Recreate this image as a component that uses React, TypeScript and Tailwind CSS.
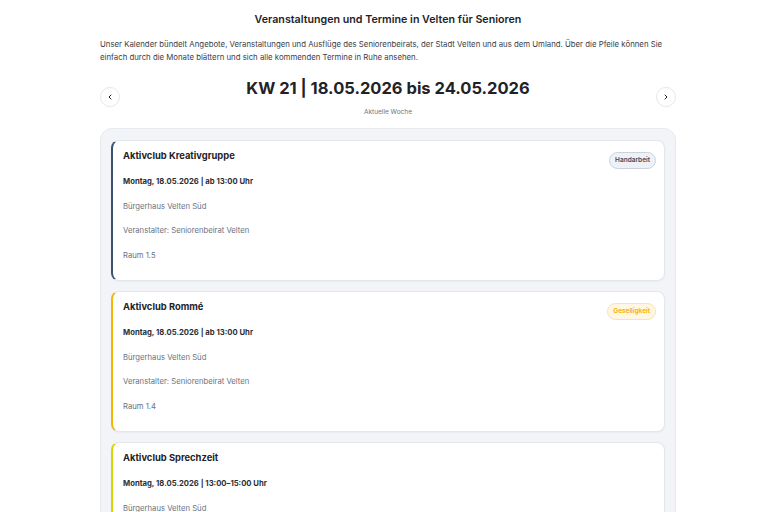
import { ChevronLeft, ChevronRight } from 'lucide-react';

type Termin = {
  title: string;
  when: string;
  place: string;
  host: string;
  room: string;
  tag?: string;
  accent: string;
  tagStyle?: string;
};

const TERMINE: Termin[] = [
  {
    title: 'Aktivclub Kreativgruppe',
    when: 'Montag, 18.05.2026 | ab 13:00 Uhr',
    place: 'Bürgerhaus Velten Süd',
    host: 'Veranstalter: Seniorenbeirat Velten',
    room: 'Raum 1.5',
    tag: 'Handarbeit',
    accent: 'border-l-[#3b5170]',
    tagStyle: 'bg-[#eef2f6] border-[#c9d2dd] text-[#3b4a5e]',
  },
  {
    title: 'Aktivclub Rommé',
    when: 'Montag, 18.05.2026 | ab 13:00 Uhr',
    place: 'Bürgerhaus Velten Süd',
    host: 'Veranstalter: Seniorenbeirat Velten',
    room: 'Raum 1.4',
    tag: 'Geselligkeit',
    accent: 'border-l-[#f7b500]',
    tagStyle: 'bg-[#fff6e3] border-[#fbe3ad] text-[#f4b000]',
  },
  {
    title: 'Aktivclub Sprechzeit',
    when: 'Montag, 18.05.2026 | 13:00–15:00 Uhr',
    place: 'Bürgerhaus Velten Süd',
    host: 'Veranstalter: Seniorenbeirat Velten',
    room: 'Raum 1.3',
    accent: 'border-l-[#d6d600]',
  },
];

function Card({ t }: { t: Termin }) {
  return (
    <div
      className={`rounded-[8px] border border-[#e3e6eb] border-l-2 ${t.accent} bg-white pl-[10px] pr-[8px] pt-[8px] pb-[18px] shadow-[0_1px_2px_rgba(0,0,0,0.04)]`}
    >
      <div className="flex h-[14px] items-start justify-between">
        <h3 className="text-[9.4px] leading-[14px] font-bold text-[#1f2328]">{t.title}</h3>
        {t.tag && (
          <span
            className={`mt-[3px] rounded-full border px-[5px] py-[3px] text-[6.5px] leading-[9px] font-semibold ${t.tagStyle}`}
          >
            {t.tag}
          </span>
        )}
      </div>
      <div className="mt-[13px] text-[7.7px] leading-[12px] font-bold text-[#2a2f36]">{t.when}</div>
      <div className="mt-[13px] text-[7.7px] leading-[12px] text-[#6b7280]">{t.place}</div>
      <div className="mt-[12px] text-[7.7px] leading-[12px] text-[#6b7280]">{t.host}</div>
      <div className="mt-[13px] text-[7.7px] leading-[12px] text-[#6b7280]">{t.room}</div>
    </div>
  );
}

export default function App() {
  return (
    <div
      className="min-h-screen bg-white pl-2"
      style={{ fontFamily: 'Inter, "Noto Sans", sans-serif' }}
    >
      <div className="mx-auto w-[576px] pt-[12px]">
        <h1 className="text-center text-[10.7px] leading-[16px] font-semibold text-[#1f2328]">
          Veranstaltungen und Termine in Velten für Senioren
        </h1>
        <p className="mt-[10px] text-[7.8px] leading-[13px] text-[#3c4048]">
          Unser Kalender bündelt Angebote, Veranstaltungen und Ausflüge des Seniorenbeirats, der Stadt Velten und aus dem Umland. Über die Pfeile können Sie einfach durch die Monate blättern und sich alle kommenden Termine in Ruhe ansehen.
        </p>

        <div className="mt-[13px] flex items-start justify-between">
          <button className="mt-[10px] flex h-[20px] w-[20px] items-center justify-center rounded-full border border-[#e5e7eb] bg-white text-[#1f2328]">
            <ChevronLeft size={8} strokeWidth={3} />
          </button>
          <div className="flex flex-col items-center">
            <div className="text-[16.5px] leading-[22px] font-bold text-[#1f2328]">
              KW 21 | 18.05.2026 bis 24.05.2026
            </div>
            <div className="mt-[8px] text-[6.5px] leading-[10px] text-[#6b7280]">Aktuelle Woche</div>
          </div>
          <button className="mt-[10px] flex h-[20px] w-[20px] items-center justify-center rounded-full border border-[#e5e7eb] bg-white text-[#1f2328]">
            <ChevronRight size={8} strokeWidth={3} />
          </button>
        </div>

        <div className="mt-[11px] flex flex-col gap-[10px] rounded-[12px] border border-[#e6e9ee] bg-[#f2f4f7] px-[10px] pt-[11px] pb-[11px]">
          {TERMINE.map((t) => (
            <Card key={t.title} t={t} />
          ))}
        </div>
      </div>
    </div>
  );
}
